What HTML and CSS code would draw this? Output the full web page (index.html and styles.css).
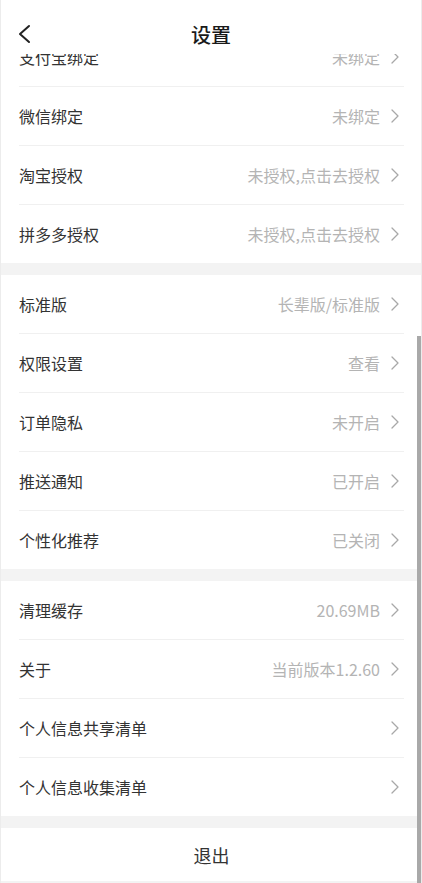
FILE: index.html
```html
<!DOCTYPE html>
<html lang="zh-CN">
<head>
<meta charset="UTF-8">
<meta name="viewport" content="width=device-width, initial-scale=1.0">
<title>设置</title>
<link rel="stylesheet" href="styles.css">
</head>
<body>
    <header class="topbar">
        <svg class="back" width="14" height="20" viewBox="0 0 14 20">
            <path d="M12 2 L3 10 L12 18" fill="none" stroke="#222" stroke-width="2" stroke-linecap="round" stroke-linejoin="round"/>
        </svg>
        <h1>设置</h1>
    </header>

    <main class="page">
        <section class="card">
            <div class="row"><span class="label">支付宝绑定</span><span class="value">未绑定</span><svg class="arrow" viewBox="0 0 8 14"><path d="M1 1 L7 7 L1 13"/></svg></div>
            <div class="row"><span class="label">微信绑定</span><span class="value">未绑定</span><svg class="arrow" viewBox="0 0 8 14"><path d="M1 1 L7 7 L1 13"/></svg></div>
            <div class="row"><span class="label">淘宝授权</span><span class="value">未授权,点击去授权</span><svg class="arrow" viewBox="0 0 8 14"><path d="M1 1 L7 7 L1 13"/></svg></div>
            <div class="row"><span class="label">拼多多授权</span><span class="value">未授权,点击去授权</span><svg class="arrow" viewBox="0 0 8 14"><path d="M1 1 L7 7 L1 13"/></svg></div>
        </section>

        <section class="card">
            <div class="row"><span class="label">标准版</span><span class="value">长辈版/标准版</span><svg class="arrow" viewBox="0 0 8 14"><path d="M1 1 L7 7 L1 13"/></svg></div>
            <div class="row"><span class="label">权限设置</span><span class="value">查看</span><svg class="arrow" viewBox="0 0 8 14"><path d="M1 1 L7 7 L1 13"/></svg></div>
            <div class="row"><span class="label">订单隐私</span><span class="value">未开启</span><svg class="arrow" viewBox="0 0 8 14"><path d="M1 1 L7 7 L1 13"/></svg></div>
            <div class="row"><span class="label">推送通知</span><span class="value">已开启</span><svg class="arrow" viewBox="0 0 8 14"><path d="M1 1 L7 7 L1 13"/></svg></div>
            <div class="row"><span class="label">个性化推荐</span><span class="value">已关闭</span><svg class="arrow" viewBox="0 0 8 14"><path d="M1 1 L7 7 L1 13"/></svg></div>
        </section>

        <section class="card">
            <div class="row"><span class="label">清理缓存</span><span class="value">20.69MB</span><svg class="arrow" viewBox="0 0 8 14"><path d="M1 1 L7 7 L1 13"/></svg></div>
            <div class="row"><span class="label">关于</span><span class="value">当前版本1.2.60</span><svg class="arrow" viewBox="0 0 8 14"><path d="M1 1 L7 7 L1 13"/></svg></div>
            <div class="row"><span class="label">个人信息共享清单</span><span class="value"></span><svg class="arrow" viewBox="0 0 8 14"><path d="M1 1 L7 7 L1 13"/></svg></div>
            <div class="row"><span class="label">个人信息收集清单</span><span class="value"></span><svg class="arrow" viewBox="0 0 8 14"><path d="M1 1 L7 7 L1 13"/></svg></div>
        </section>

        <section class="card logout">退出</section>
    </main>

    <div class="scroll-thumb"></div>
</body>
</html>
```

FILE: styles.css
```css
html, body {
    margin: 0;
    padding: 0;
}

body {
    font-family: "Noto Sans CJK SC", "Noto Sans", sans-serif;
    background: #f3f3f3;
    height: 883px;
    overflow: hidden;
    border-left: 1px solid #ececec;
    border-right: 1px solid #ececec;
    box-sizing: border-box;
}

.topbar {
    position: fixed;
    top: 0;
    left: 1px;
    right: 1px;
    height: 54px;
    background: #fff;
    z-index: 2;
    display: flex;
    justify-content: center;
}

.topbar h1 {
    margin: 0;
    padding-top: 21px;
    font-size: 20px;
    line-height: 28px;
    font-weight: 500;
    color: #1a1a1a;
}

.back {
    position: absolute;
    left: 16px;
    top: 24px;
}

.page {
    padding-top: 28px;
    display: flex;
    flex-direction: column;
    gap: 12px;
}

.card {
    background: #fff;
    padding: 0 17px 0 18px;
}

.row {
    height: 58px;
    display: flex;
    align-items: center;
    border-bottom: 1px solid #f0f0f0;
}

.row:last-child {
    border-bottom: none;
}

.label {
    flex: 1;
    font-size: 16px;
    color: #333;
}

.value {
    font-size: 16px;
    color: #b4b4b4;
}

.arrow {
    width: 8px;
    height: 14px;
    margin: 0 5px 0 11px;
    fill: none;
    stroke: #a8a8a8;
    stroke-width: 1.3;
    stroke-linecap: round;
    stroke-linejoin: round;
}

.logout {
    height: 53px;
    display: flex;
    align-items: center;
    justify-content: center;
    font-size: 18px;
    color: #333;
}

.scroll-thumb {
    position: fixed;
    top: 336px;
    bottom: 0;
    right: 1px;
    width: 4px;
    background: #a9a9a9;
    z-index: 3;
}
```
